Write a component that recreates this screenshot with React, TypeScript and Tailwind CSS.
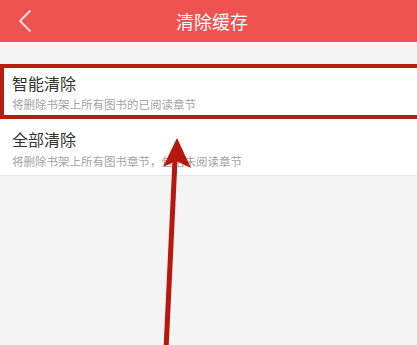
import React from 'react';

const font = { fontFamily: '"Noto Sans CJK SC", "Noto Sans", sans-serif' };

export default function App() {
  return (
    <div className="relative w-[417px] h-[345px] overflow-hidden bg-[#f4f4f4]" style={font}>
      {/* header */}
      <div className="relative h-[42px] bg-[#ef5350] flex items-center justify-center">
        <svg className="absolute left-[17px] top-[9px]" width="16" height="24" viewBox="0 0 16 24">
          <path d="M13 2 L3 12 L13 22" fill="none" stroke="#fbe3e3" strokeWidth="1.8" strokeLinecap="round" strokeLinejoin="round" />
        </svg>
        <span className="text-[18px] leading-none text-white pl-[7px]">清除缓存</span>
      </div>

      <div className="h-[22px]" />

      {/* smart clear, highlighted */}
      <div className="w-[430px] bg-white border-[4px] border-r-0 border-[#b71c10] pl-[8px] pt-[4px] pb-[3px]">
        <div className="text-[16px] leading-[22px] text-[#333]">智能清除</div>
        <div className="mt-[2px] text-[11.5px] leading-[16px] text-[#a3a3a3]">将删除书架上所有图书的已阅读章节</div>
      </div>

      {/* clear all */}
      <div className="bg-white border-b border-[#e6e6e6] pl-[12px] pt-[9px] pb-[6px]">
        <div className="text-[16px] leading-[22px] text-[#333]">全部清除</div>
        <div className="mt-[3px] text-[11.5px] leading-[16px] text-[#a3a3a3]">将删除书架上所有图书章节，包括未阅读章节</div>
      </div>

      {/* annotation arrow */}
      <svg className="absolute left-0 top-0 pointer-events-none" width="417" height="345" viewBox="0 0 417 345">
        <line x1="175" y1="160" x2="166" y2="350" stroke="#b9160e" strokeWidth="5" />
        <path d="M177 138 L191 168 L176 161 L163 167 Z" fill="#b9160e" />
      </svg>
    </div>
  );
}
